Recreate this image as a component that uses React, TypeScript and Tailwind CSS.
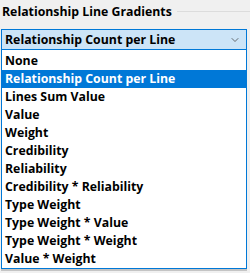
import { ChevronDown } from 'lucide-react';

const options = [
	'None',
	'Relationship Count per Line',
	'Lines Sum Value',
	'Value',
	'Weight',
	'Credibility',
	'Reliability',
	'Credibility * Reliability',
	'Type Weight',
	'Type Weight * Value',
	'Type Weight * Weight',
	'Value * Weight',
];

const selected = 'Relationship Count per Line';

export default function App() {
	return (
		<div
			className="w-[250px] h-[273px] bg-[#f0f0f0] text-black font-bold text-[12.3px] overflow-hidden"
			style={{ fontFamily: '"Open Sans", "Noto Sans", sans-serif' }}
		>
			{/* group header */}
			<div className="flex items-center h-[23px] pl-[2px]">
				<span className="leading-[18px] whitespace-nowrap">Relationship Line Gradients</span>
				<div className="flex-1 ml-[5px] border-t border-[#dcdcdc]" />
			</div>

			<div className="ml-[1px] w-[246px]">
				{/* combo box */}
				<div className="mt-[6px] h-[21px] flex items-center justify-between border border-[#0078d7] bg-[#cce4f7] pl-[3px] pr-[5px]">
					<span className="leading-[18px] whitespace-nowrap">{selected}</span>
					<ChevronDown size={12} strokeWidth={1.5} className="text-[#404040]" />
				</div>

				{/* dropdown list */}
				<div className="border border-[#0078d7] border-t-0 bg-white pt-[2px] shadow-[0_2px_0_#c4c4c4]">
					{options.map((opt) => (
						<div
							key={opt}
							className={
								opt === selected
									? 'h-[18px] leading-[18px] px-[3px] bg-[#0078d7] text-white whitespace-nowrap'
									: 'h-[18px] leading-[18px] px-[3px] whitespace-nowrap'
							}
						>
							{opt}
						</div>
					))}
				</div>
			</div>
		</div>
	);
}
